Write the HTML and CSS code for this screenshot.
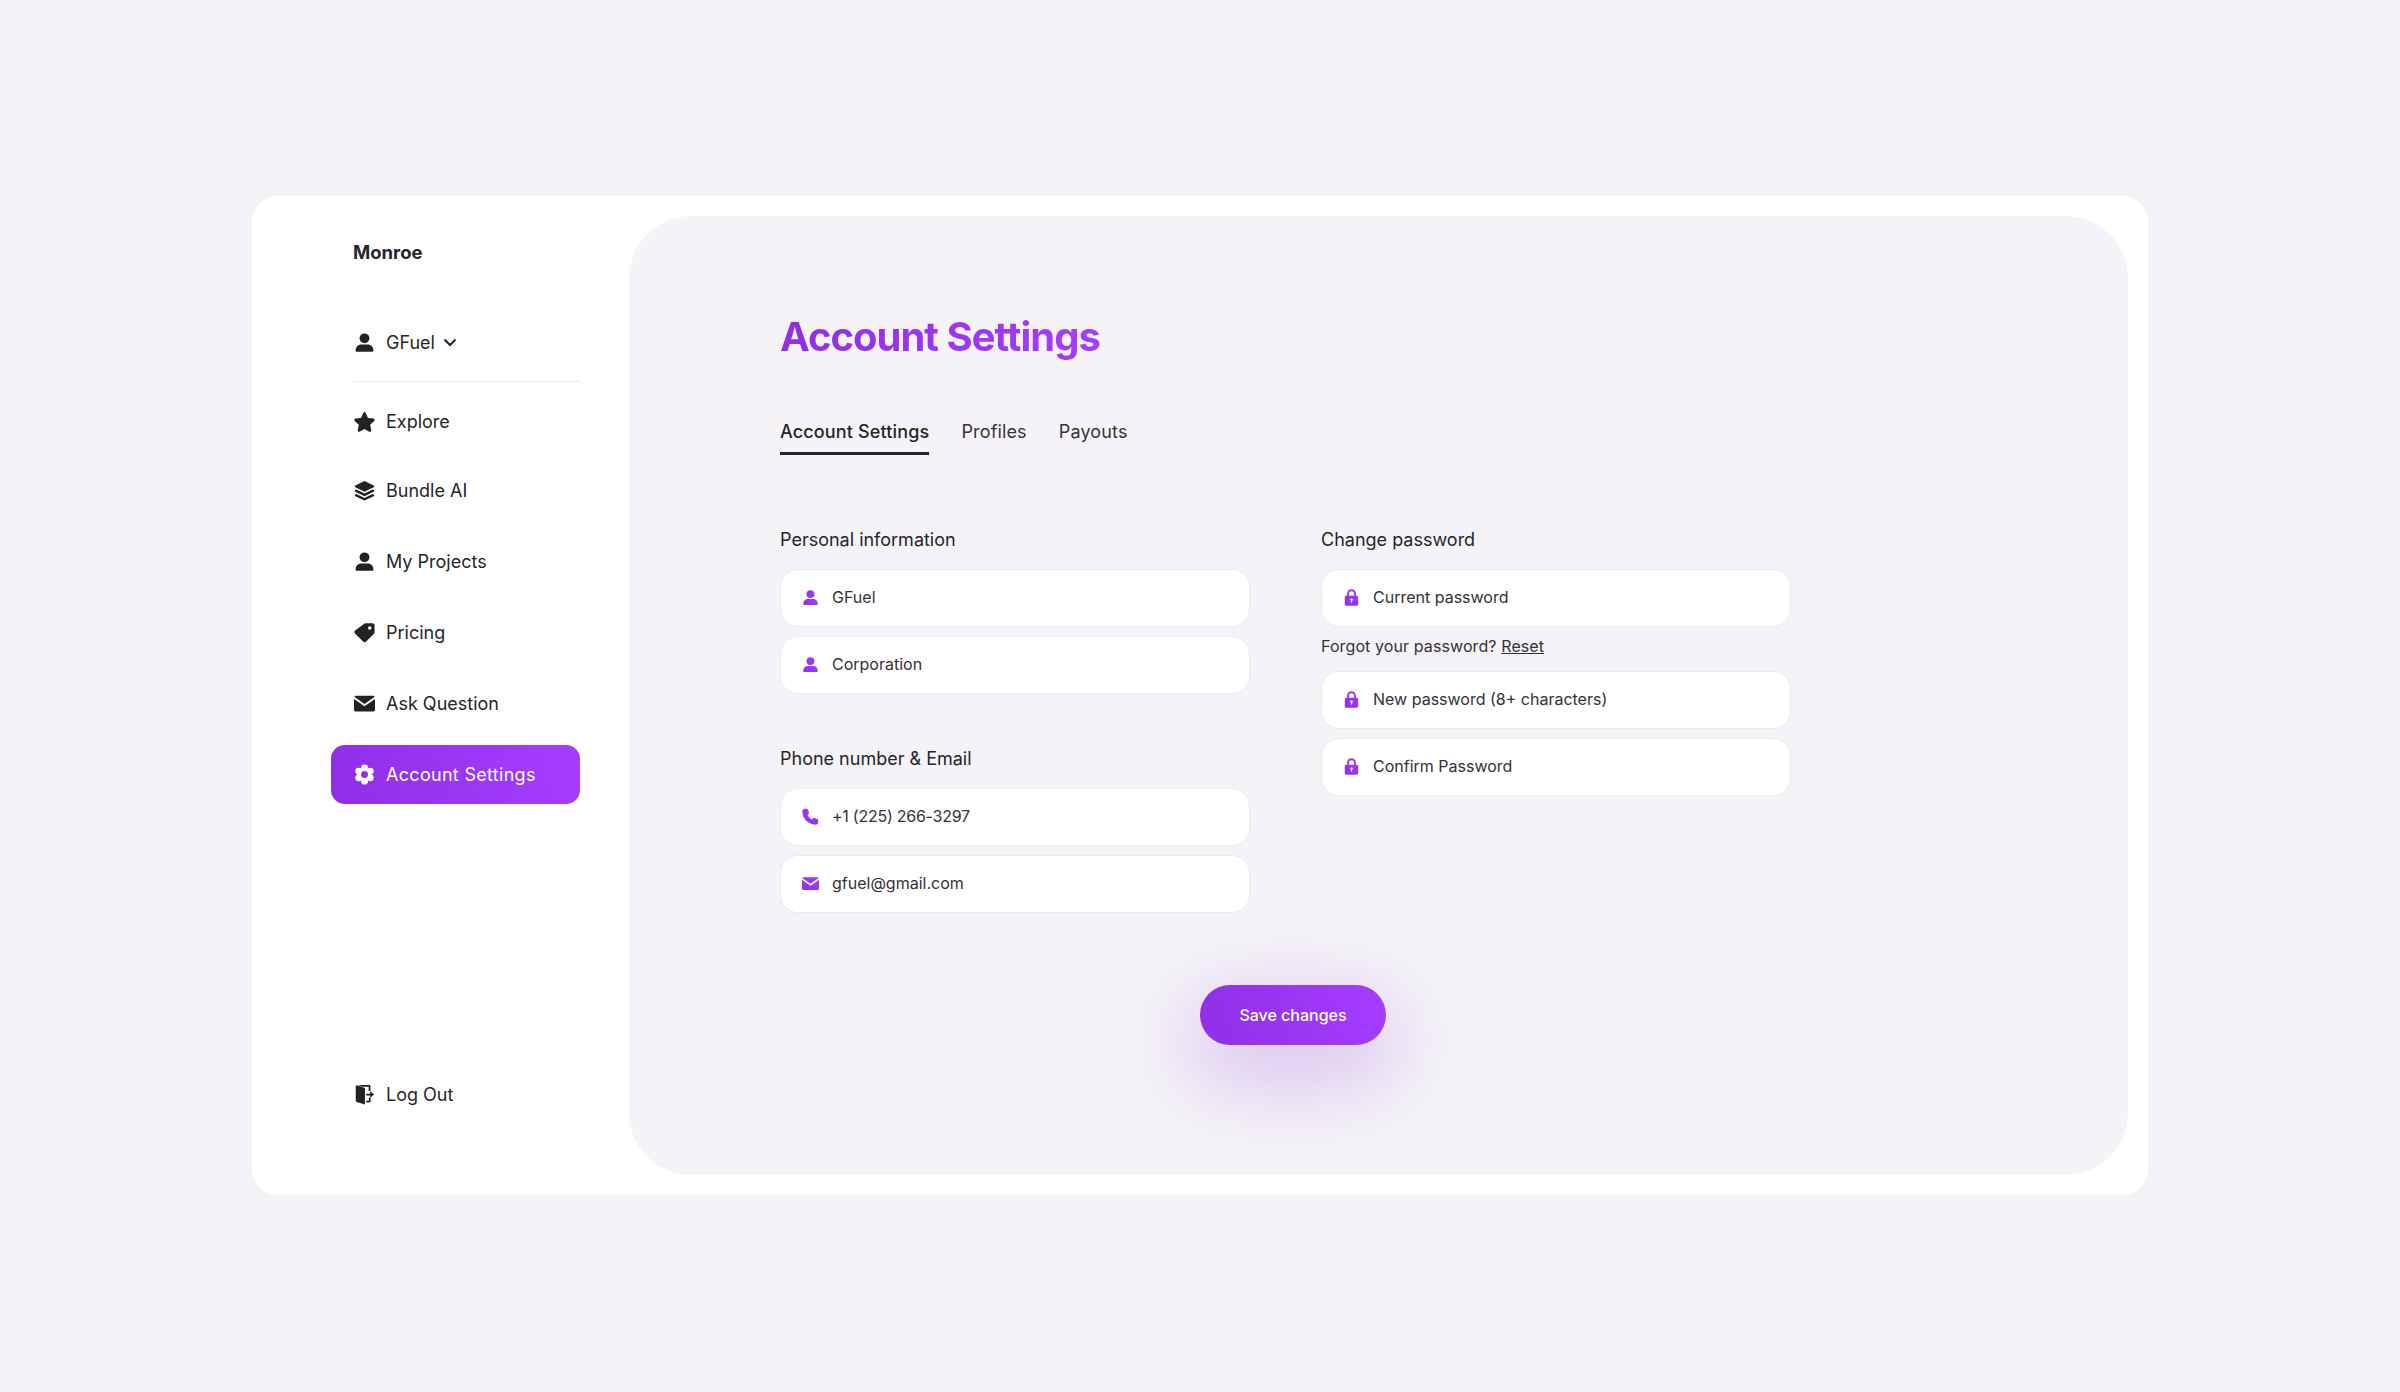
FILE: index.html
```html
<!DOCTYPE html>
<html>
<head>
  <meta name="viewport" content="width=device-width, initial-scale=1.0">
  <link rel="stylesheet" href="styles.css">
</head>
<body>
  <!-- Icon sprite -->
  <svg class="sprite" xmlns="http://www.w3.org/2000/svg">
    <defs>
      <linearGradient id="purple" x1="0" y1="1" x2="1" y2="0">
        <stop offset="0" stop-color="#8f2fe6"/>
        <stop offset="1" stop-color="#a63dff"/>
      </linearGradient>
      <mask id="gear-hole">
        <rect width="24" height="24" fill="#fff"/>
        <circle cx="12" cy="12" r="4" fill="#000"/>
      </mask>
    </defs>
    <symbol id="i-user" viewBox="0 0 24 24">
      <circle cx="12" cy="7.200" r="5.600"/>
      <path d="M1.800 21.200c0-4.400 3-7 6.400-7h7.600c3.400 0 6.400 2.600 6.400 7 0 1-.6 1.500-1.500 1.500H3.300c-.9 0-1.500-.5-1.500-1.500z"/>
    </symbol>
    <symbol id="i-star" viewBox="0 0 24 24">
      <path d="M12 1.200c.6 0 1.100.3 1.400 1l2.600 5.700 6.200.8c1.400.2 1.900 1.800.9 2.700l-4.600 4.300 1.200 6.200c.3 1.400-1.200 2.400-2.400 1.700L12 20.500l-5.300 3c-1.200.7-2.700-.3-2.400-1.700l1.200-6.200-4.600-4.300c-1-.9-.5-2.500.9-2.700L8 7.900l2.600-5.700c.3-.7.8-1 1.400-1z"/>
    </symbol>
    <symbol id="i-layers" viewBox="0 0 24 24">
      <path d="M12 1l10.500 5.300c.8.400.8 1.500 0 1.900L12 13.500 1.500 8.200c-.8-.4-.8-1.500 0-1.900z"/>
      <path d="M2.800 10.800L12 15.500l9.200-4.700 1.300.7c.8.400.8 1.500 0 1.900L12 18.700 1.500 13.400c-.8-.4-.8-1.500 0-1.900z"/>
      <path d="M2.800 16L12 20.700l9.200-4.700 1.300.7c.8.400.8 1.500 0 1.900L12 23.500 1.500 18.600c-.8-.4-.8-1.500 0-1.900z"/>
    </symbol>
    <symbol id="i-tag" viewBox="0 0 24 24">
      <path fill-rule="evenodd" d="M13.500 1.500h7.800c1.200 0 2.200 1 2.200 2.200v7.800c0 .8-.3 1.500-.9 2.100l-8.700 8.700c-1 1-2.500 1-3.500 0L1.200 13.100c-1-1-1-2.500 0-3.500l10.200-7.200c.6-.6 1.300-.9 2.100-.9zm4.500 3.300a2 2 0 1 0 0 4 2 2 0 0 0 0-4z"/>
    </symbol>
    <symbol id="i-mail" viewBox="0 0 24 24">
      <path d="M2.500 3h19c1 0 1.800.6 2.200 1.400L12 12.500.3 4.400C.7 3.600 1.500 3 2.500 3z"/>
      <path d="M0 6.800l12 8.200 12-8.200v12.200c0 1.200-1 2.200-2.200 2.200H2.200C1 21.200 0 20.200 0 19z"/>
    </symbol>
    <symbol id="i-gear" viewBox="0 0 24 24">
      <g mask="url(#gear-hole)">
        <circle cx="12" cy="12" r="7.500"/>
        <circle cx="12" cy="4.400" r="3.900"/>
        <circle cx="12" cy="19.600" r="3.900"/>
        <circle cx="5.400" cy="8.200" r="3.900"/>
        <circle cx="18.600" cy="8.200" r="3.900"/>
        <circle cx="5.400" cy="15.800" r="3.900"/>
        <circle cx="18.600" cy="15.800" r="3.900"/>
      </g>
    </symbol>
    <symbol id="i-door" viewBox="0 0 24 24">
      <path d="M2 3.200C2 2.100 2.800 1.400 3.800 1.600L12.500 4.500V23.500L3 20.500C2.300 20.200 2 19.700 2 19z"/>
      <path d="M5 1h12.500c.8 0 1.300.5 1.300 1.300V8h-2V3H9z"/>
      <path d="M14 19h3v-3.500h2v4.200c0 .8-.5 1.300-1.300 1.300H14z"/>
      <path d="M14 11h4.500V8.300L23 12l-4.500 3.700V13H14z"/>
    </symbol>
    <symbol id="i-phone" viewBox="0 0 24 24">
      <path d="M6.300 1c1 0 1.600.5 2 1.500l1.500 3.700c.3.800.1 1.500-.4 2L7.700 10c1.300 2.700 3.500 5 6.300 6.300l1.800-1.700c.6-.6 1.300-.7 2-.4l3.700 1.500c1 .4 1.500 1 1.500 2v2c0 2.400-1.600 3.800-3.900 3.800C9.200 23.500.5 14.800.5 5 .5 2.600 2 1 4.300 1z"/>
    </symbol>
    <symbol id="i-lock" viewBox="0 0 24 24">
      <path fill-rule="evenodd" d="M12 .5c3.700 0 6.300 2.700 6.300 6.400V9.500h1.200c1.200 0 2 .8 2 2v10c0 1.200-.8 2-2 2h-15c-1.200 0-2-.8-2-2v-10c0-1.200.8-2 2-2h1.200V6.900C5.700 3.200 8.300.5 12 .5zm0 2.500C9.800 3 8.400 4.600 8.400 6.900v2.600h7.200V6.900C15.600 4.600 14.200 3 12 3zm0 10.300c-1 0-1.800.8-1.800 1.800 0 .7.400 1.300 1 1.600v2.500h1.600v-2.500c.6-.3 1-.9 1-1.600 0-1-.8-1.800-1.800-1.800z"/>
    </symbol>
  </svg>

  <div class="app">
    <!-- Sidebar -->
    <aside class="sidebar">
      <div class="logo">Monroe</div>

      <div class="nav-item account-switch">
        <svg class="nav-icon"><use href="#i-user"/></svg>
        <span>GFuel</span>
        <svg class="chevron" viewBox="0 0 14 9"><path d="M1.500 1.500L7 7l5.500-5.500"/></svg>
      </div>
      <div class="divider"></div>

      <nav class="nav">
        <a class="nav-item nav-item-first"><svg class="nav-icon"><use href="#i-star"/></svg><span>Explore</span></a>
        <a class="nav-item"><svg class="nav-icon"><use href="#i-layers"/></svg><span>Bundle AI</span></a>
        <a class="nav-item"><svg class="nav-icon"><use href="#i-user"/></svg><span>My Projects</span></a>
        <a class="nav-item"><svg class="nav-icon"><use href="#i-tag"/></svg><span>Pricing</span></a>
        <a class="nav-item"><svg class="nav-icon"><use href="#i-mail"/></svg><span>Ask Question</span></a>
        <a class="nav-item active"><svg class="nav-icon"><use href="#i-gear"/></svg><span>Account Settings</span></a>
      </nav>

      <a class="nav-item logout"><svg class="nav-icon"><use href="#i-door"/></svg><span>Log Out</span></a>
    </aside>

    <!-- Main panel -->
    <main class="panel">
      <h1 class="title">Account Settings</h1>

      <div class="tabs">
        <a class="tab active">Account Settings</a>
        <a class="tab">Profiles</a>
        <a class="tab">Payouts</a>
      </div>

      <form class="columns" onsubmit="return false;">
        <div class="column">
          <h3 class="group-label">Personal information</h3>
          <div class="field"><svg class="field-icon"><use href="#i-user"/></svg><span>GFuel</span></div>
          <div class="field"><svg class="field-icon"><use href="#i-user"/></svg><span>Corporation</span></div>

          <h3 class="group-label group-next">Phone number &amp; Email</h3>
          <div class="field field-phone"><svg class="field-icon"><use href="#i-phone"/></svg><span>+1 (225) 266-3297</span></div>
          <div class="field"><svg class="field-icon"><use href="#i-mail"/></svg><span>gfuel@gmail.com</span></div>
        </div>

        <div class="column">
          <h3 class="group-label">Change password</h3>
          <div class="field"><svg class="field-icon"><use href="#i-lock"/></svg><span>Current password</span></div>
          <p class="forgot">Forgot your password? <a>Reset</a></p>
          <div class="field"><svg class="field-icon"><use href="#i-lock"/></svg><span>New password (8+ characters)</span></div>
          <div class="field"><svg class="field-icon"><use href="#i-lock"/></svg><span>Confirm Password</span></div>
        </div>
      </form>

      <button class="save-btn">Save changes</button>
    </main>
  </div>
</body>
</html>
```

FILE: styles.css
```css
:root {
  --bg-color: #f5f3f8;
  --text-color: #26252b;
  --purple-grad: linear-gradient(75deg, #8f2fe6, #a63dff);
}

* {
  box-sizing: border-box;
}

body {
  margin: 0;
  height: 100vh;
  padding-bottom: 1px;
  display: flex;
  align-items: center;
  justify-content: center;
  background: var(--bg-color);
  color: var(--text-color);
  font-family: Inter, "Noto Sans", sans-serif;
}

.sprite {
  position: absolute;
  width: 0;
  height: 0;
}

.app {
  width: 1896px;
  height: 999px;
  display: flex;
  padding: 20px 20px 20px 0;
  background: #fff;
  border-radius: 26px;
}

/* Sidebar */
.sidebar {
  width: 377px;
  flex-shrink: 0;
  display: flex;
  flex-direction: column;
  padding: 24px 49px 51px 79px;
}

.logo {
  font-size: 18.5px;
  font-weight: 700;
  line-height: 24px;
  margin: 0 0 49px 22px;
}

.nav {
  display: flex;
  flex-direction: column;
  gap: 12px;
}

.nav-item {
  height: 59px;
  display: flex;
  align-items: center;
  gap: 11px;
  padding-left: 23px;
  border-radius: 14px;
  font-size: 18px;
  color: var(--text-color);
}

.nav-item-first {
  margin-bottom: -2px;
}

.nav-icon {
  width: 21px;
  height: 21px;
  fill: #222;
  flex-shrink: 0;
}

.chevron {
  width: 14px;
  height: 9px;
  fill: none;
  stroke: #222;
  stroke-width: 2;
  margin-left: -3px;
}

.divider {
  height: 1px;
  margin: 9px 0 10px 22px;
  background: #eceaf0;
}

.nav-item.active {
  background: var(--purple-grad);
  color: #fff;
  letter-spacing: 0.3px;
}

.nav-item.active .nav-icon {
  fill: #fff;
}

.logout {
  margin-top: auto;
}

/* Main panel */
.panel {
  flex: 1;
  padding: 97px 0 0 151px;
  background: var(--bg-color);
  border-radius: 62px;
}

.title {
  margin: 0;
  font-size: 40px;
  font-weight: 700;
  line-height: 48px;
  letter-spacing: -1px;
  width: fit-content;
  background: var(--purple-grad);
  -webkit-background-clip: text;
  background-clip: text;
  color: transparent;
}

.tabs {
  display: flex;
  gap: 32px;
  margin-top: 59px;
}

.tab {
  font-size: 18px;
  line-height: 24px;
  letter-spacing: 0.15px;
  padding-bottom: 8px;
  border-bottom: 3px solid transparent;
  color: #36353b;
}

.tab.active {
  font-weight: 500;
  color: var(--text-color);
  border-bottom-color: var(--text-color);
}

.columns {
  display: flex;
  gap: 71px;
  margin-top: 73px;
}

.column {
  width: 470px;
}

.group-label {
  margin: 0 0 17px;
  font-size: 18px;
  font-weight: 400;
  line-height: 24px;
}

.group-next {
  margin-top: 53px;
}

.field {
  height: 58px;
  display: flex;
  align-items: center;
  gap: 13px;
  padding: 0 0 2px 21px;
  background: #fff;
  border: 1px solid #eceaf1;
  border-radius: 18px;
  font-size: 16px;
  color: #33323a;
}

.field + .field {
  margin-top: 9px;
}

.field-phone span {
  letter-spacing: -0.25px;
}

.field-icon {
  width: 17px;
  height: 17px;
  fill: url(#purple);
  flex-shrink: 0;
}

.forgot {
  margin: 7px 0 13px;
  font-size: 16px;
  line-height: 24px;
  letter-spacing: 0.1px;
  color: #33323a;
}

.forgot a {
  text-decoration: underline;
}

.save-btn {
  display: block;
  width: 186px;
  height: 60px;
  margin: 72px 0 0 420px;
  border: none;
  border-radius: 30px;
  background: var(--purple-grad);
  color: #fff;
  font-family: inherit;
  font-size: 16px;
  font-weight: 500;
  box-shadow: 0 26px 80px 14px rgba(150, 80, 215, 0.28);
}
```
